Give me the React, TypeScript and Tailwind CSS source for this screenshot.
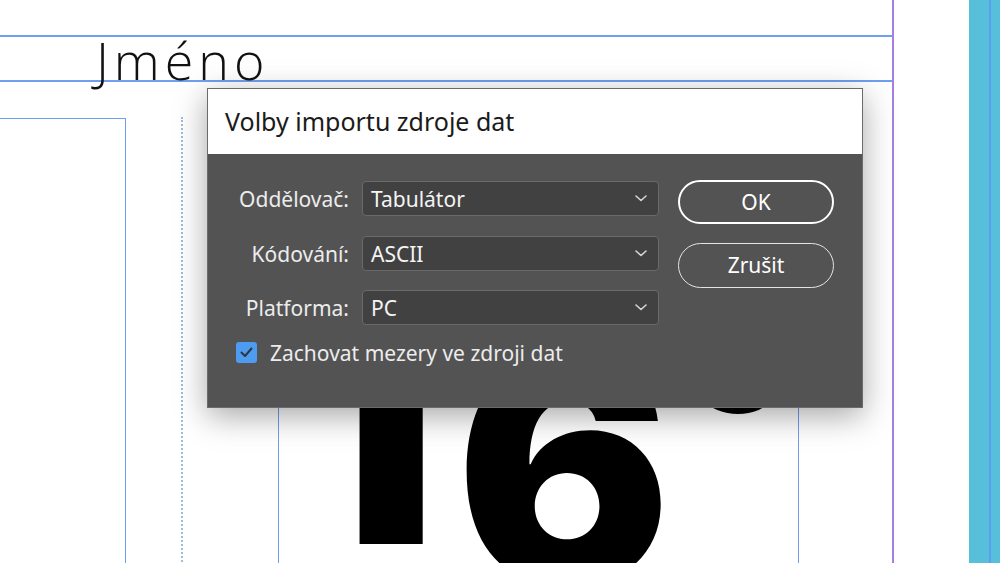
import React from "react";

const ui = { fontFamily: '"Noto Sans", "Open Sans", sans-serif' };

function Chevron() {
  return (
    <svg width="12" height="7" viewBox="0 0 12 7" className="shrink-0">
      <path d="M1 1 L6 5.5 L11 1" fill="none" stroke="#d6d6d6" strokeWidth="1.6" strokeLinecap="round" strokeLinejoin="round" />
    </svg>
  );
}

function Row({ label, value }: { label: string; value: string }) {
  return (
    <div className="flex items-center h-[35px]">
      <div className="w-[125px] text-right text-[21px] text-[#ececec] leading-none whitespace-nowrap pt-[2px]">{label}</div>
      <div className="ml-[13px] w-[297px] h-[35px] rounded-[4px] border border-[#6a6a6a] bg-[#414141] flex items-center justify-between pl-[8px] pr-[11px]">
        <span className="text-[21px] text-[#f4f4f4] leading-none pt-[2px]">{value}</span>
        <Chevron />
      </div>
    </div>
  );
}

export default function App() {
  return (
    <div className="relative w-[1000px] h-[563px] overflow-hidden bg-white">
      {/* document guides */}
      <div className="absolute left-0 top-[35px] w-[893px] h-[1.5px] bg-[#6f9ff0]" />
      <div className="absolute left-0 top-[80px] w-[893px] h-[1.5px] bg-[#6f9ff0]" />
      <div className="absolute left-[892px] top-0 w-[2px] h-[563px] bg-[#a77fe2]" />
      <div className="absolute left-[969px] top-0 w-[31px] h-[563px] bg-[#58bfdb] flex">
        <div className="ml-[20px] w-[2px] h-full bg-[#5d9df0]" />
      </div>

      {/* Jméno */}
      <div
        className="absolute left-[96px] top-[34px] text-[52px] leading-none tracking-[5px] text-[#111] font-light"
        style={{ fontFamily: '"Open Sans", sans-serif' }}
      >
        Jméno
      </div>

      {/* frames */}
      <div className="absolute left-[-10px] top-[118px] w-[136px] h-[500px] border-[1.5px] border-[#6f9ff0]" />
      <div className="absolute left-[181px] top-[117px] h-[460px] border-l-[2px] border-dotted border-[#9dbce0]" />
      <div className="absolute left-[278px] top-[300px] w-[521px] h-[400px] border-[1.5px] border-[#6f9ff0]" />

      {/* big number */}
      <div
        className="absolute left-[293px] top-[308px] text-[320px] leading-none font-black text-black whitespace-nowrap"
        style={{ fontFamily: 'Inter, sans-serif' }}
      >
        <span className="inline-block -translate-y-[40px]">1</span>
        <span className="ml-[18px]">6</span>
      </div>
      <div className="absolute left-[684px] top-[306px] w-[108px] h-[108px] rounded-full bg-black" />

      {/* dialog */}
      <div
        className="absolute left-[207px] top-[88px] w-[656px] h-[320px] border border-[#6b6b6b] bg-[#535353] flex flex-col shadow-[0_8px_30px_rgba(0,0,0,0.35)]"
        style={ui}
      >
        <div className="h-[65px] bg-white flex items-center pl-[17px]">
          <span className="text-[25px] text-[#1b1b1b] leading-none">Volby importu zdroje dat</span>
        </div>
        <div className="flex pl-[16px] pt-[27px]">
          <div className="flex flex-col w-[435px]">
            <Row label="Oddělovač:" value="Tabulátor" />
            <div className="mt-[20px]">
              <Row label="Kódování:" value="ASCII" />
            </div>
            <div className="mt-[19px]">
              <Row label="Platforma:" value="PC" />
            </div>
            <div className="mt-[16px] flex items-center pl-[12px]">
              <div className="w-[21px] h-[21px] rounded-[3px] bg-[#4d9cf0] flex items-center justify-center">
                <svg width="13" height="11" viewBox="0 0 13 11">
                  <path d="M1.5 5.5 L5 9 L11.5 1.5" fill="none" stroke="#2f3640" strokeWidth="2" strokeLinecap="round" strokeLinejoin="round" />
                </svg>
              </div>
              <span className="ml-[13px] text-[21px] text-[#ececec] leading-none whitespace-nowrap pt-[2px]">Zachovat mezery ve zdroji dat</span>
            </div>
          </div>
          <div className="ml-[19px] flex flex-col gap-[19px] -mt-[1px]">
            <button className="w-[156px] h-[44px] rounded-full border-[2.5px] border-white text-[21px] text-white leading-none flex items-center justify-center">
              OK
            </button>
            <button className="w-[156px] h-[45px] rounded-full border-[1.5px] border-[#e4e4e4] text-[21px] text-white leading-none flex items-center justify-center">
              Zrušit
            </button>
          </div>
        </div>
      </div>
    </div>
  );
}
